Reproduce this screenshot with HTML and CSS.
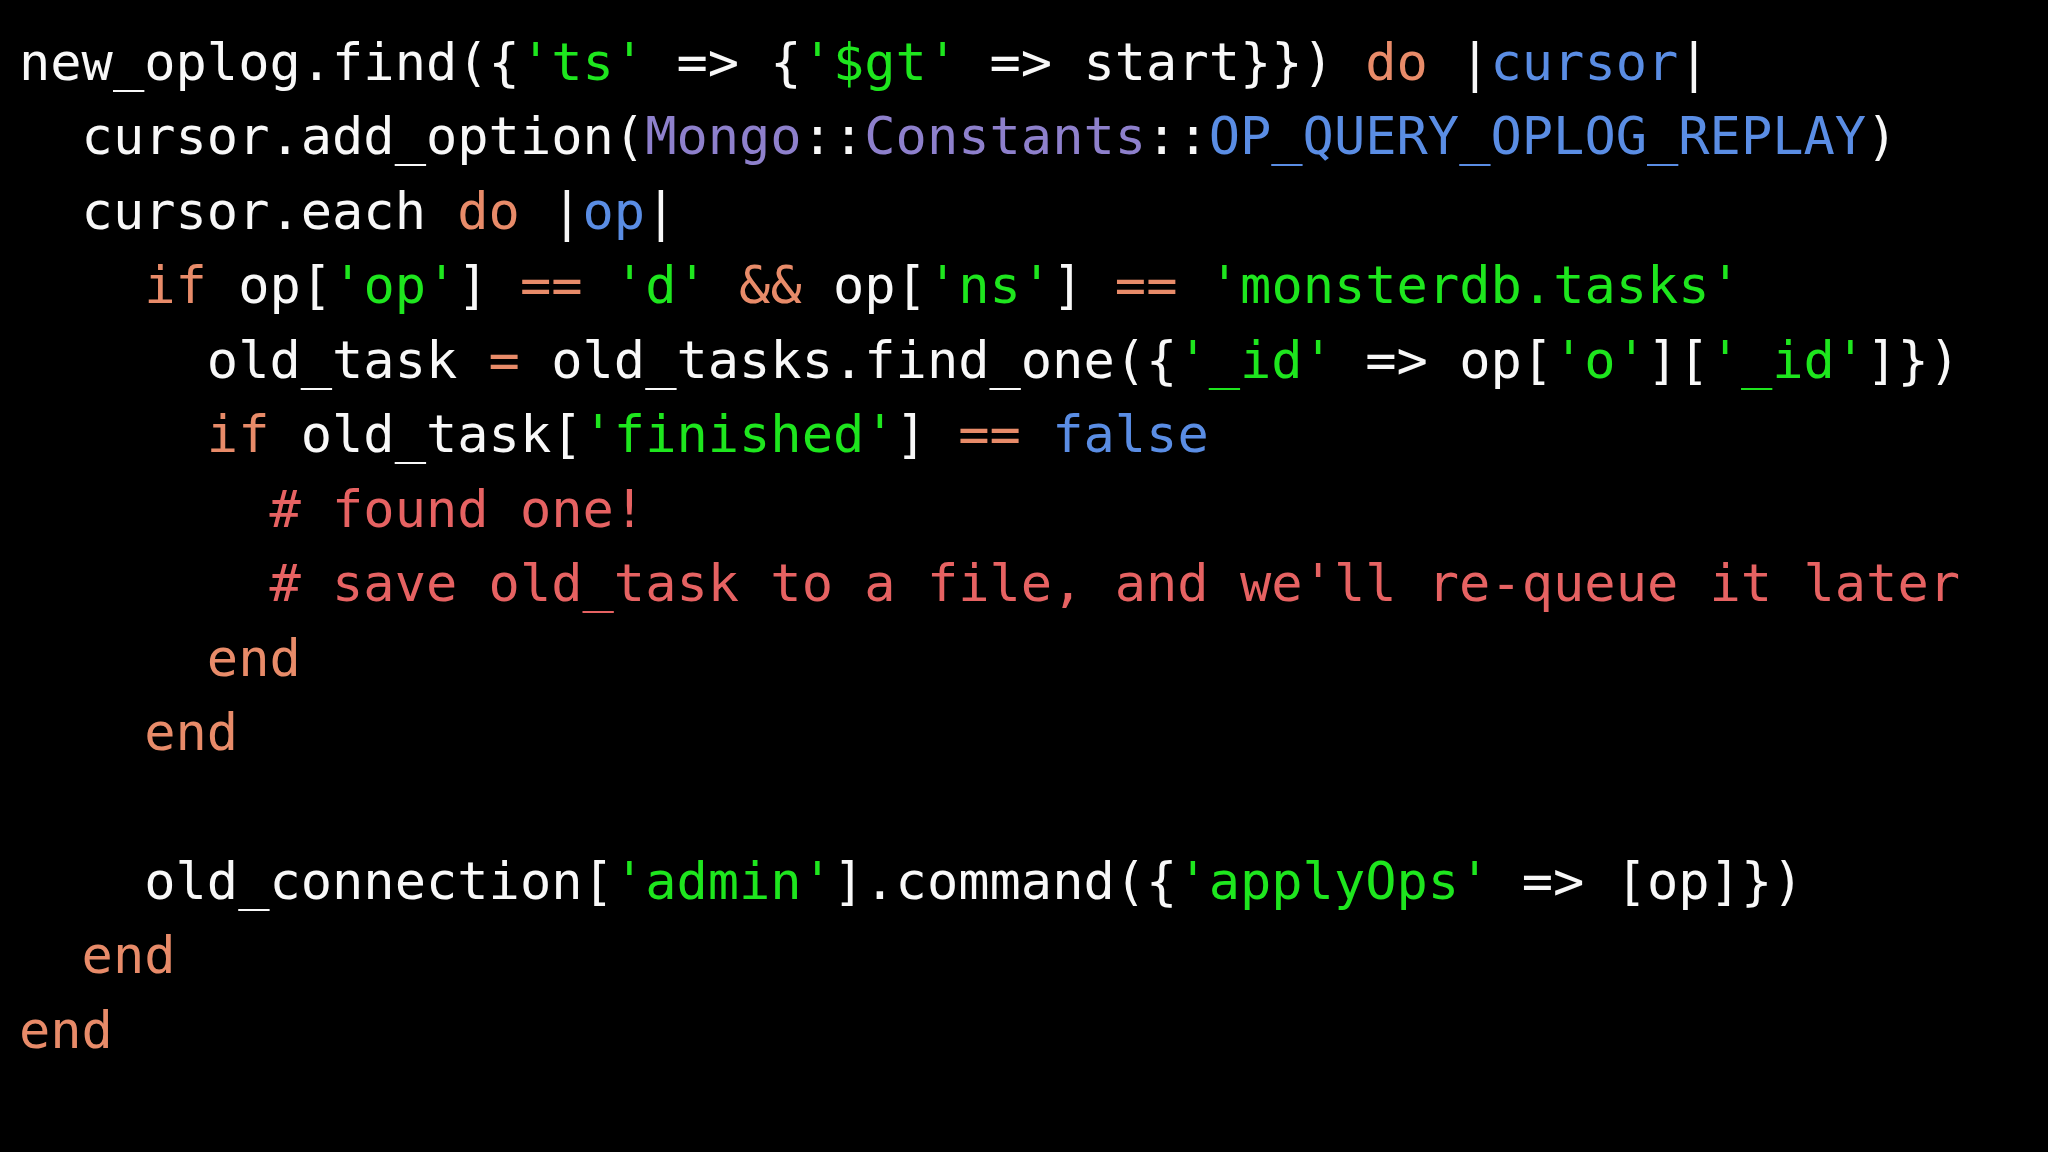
FILE: index.html
```html
<!DOCTYPE html>
<html>
<head>
<meta charset="utf-8">
<link rel="stylesheet" href="styles.css">
</head>
<body>
<div class="code">
<div class="ln">new_oplog.find({<span class="s">'ts'</span> =&gt; {<span class="s">'$gt'</span> =&gt; start}}) <span class="k">do</span> |<span class="v">cursor</span>|</div>
<div class="ln i1">cursor.add_option(<span class="c">Mongo</span>::<span class="c">Constants</span>::<span class="v">OP_QUERY_OPLOG_REPLAY</span>)</div>
<div class="ln i1">cursor.each <span class="k">do</span> |<span class="v">op</span>|</div>
<div class="ln i2"><span class="k">if</span> op[<span class="s">'op'</span>] <span class="k">==</span> <span class="s">'d'</span> <span class="k">&amp;&amp;</span> op[<span class="s">'ns'</span>] <span class="k">==</span> <span class="s">'monsterdb.tasks'</span></div>
<div class="ln i3">old_task <span class="k">=</span> old_tasks.find_one({<span class="s">'_id'</span> =&gt; op[<span class="s">'o'</span>][<span class="s">'_id'</span>]})</div>
<div class="ln i3"><span class="k">if</span> old_task[<span class="s">'finished'</span>] <span class="k">==</span> <span class="v">false</span></div>
<div class="ln i4"><span class="r"># found one!</span></div>
<div class="ln i4"><span class="r"># save old_task to a file, and we'll re-queue it later</span></div>
<div class="ln i3"><span class="k">end</span></div>
<div class="ln i2"><span class="k">end</span></div>
<div class="ln blank"></div>
<div class="ln i2">old_connection[<span class="s">'admin'</span>].command({<span class="s">'applyOps'</span> =&gt; [op]})</div>
<div class="ln i1"><span class="k">end</span></div>
<div class="ln"><span class="k">end</span></div>
</div>
</body>
</html>
```
FILE: styles.css
```css
html, body {
  margin: 0;
  padding: 0;
  background: #000;
  width: 2048px;
  height: 1152px;
  overflow: hidden;
}
.code {
  display: flex;
  flex-direction: column;
  padding: 25px 0 0 19px;
  font-family: "DejaVu Sans Mono", monospace;
  font-size: 52px;
  line-height: 74.45px;
  color: #f8f8f8;
}
.ln {
  white-space: pre;
  height: 74.45px;
}
.i1 { padding-left: 2ch; }
.i2 { padding-left: 4ch; }
.i3 { padding-left: 6ch; }
.i4 { padding-left: 8ch; }
.s { color: #1ee61e; }
.k { color: #e88b69; }
.v { color: #5a8de4; }
.c { color: #8e80cc; }
.r { color: #e66262; }
```
